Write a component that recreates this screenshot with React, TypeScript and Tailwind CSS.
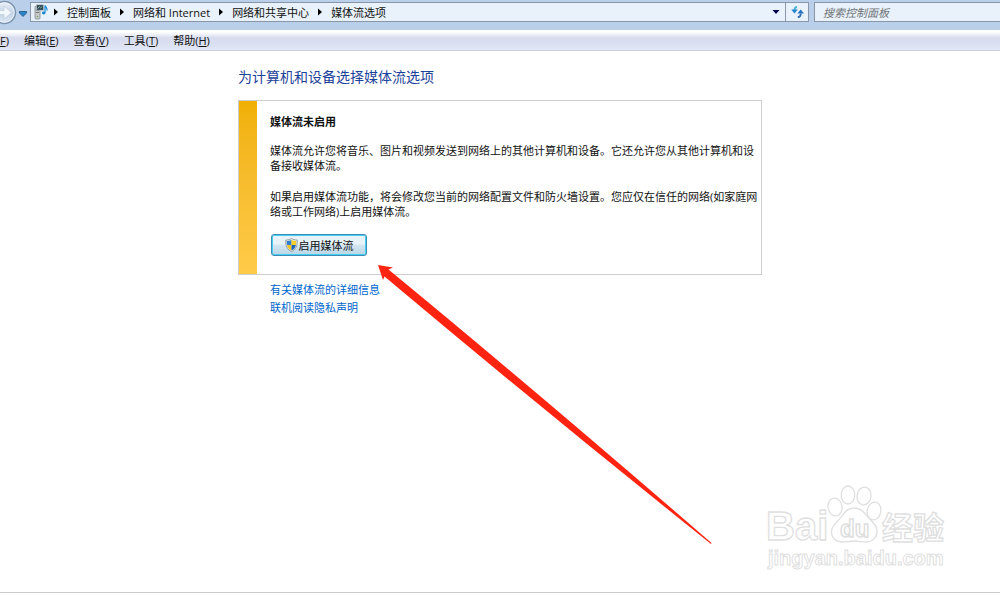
import { Fragment } from "react";

const crumbs = ["控制面板", "网络和 Internet", "网络和共享中心", "媒体流选项"];

const menus = [
  { label: "编辑", accessKey: "E" },
  { label: "查看", accessKey: "V" },
  { label: "工具", accessKey: "T" },
  { label: "帮助", accessKey: "H" },
];

const links = ["有关媒体流的详细信息", "联机阅读隐私声明"];

const CrumbArrow = () => (
  <svg viewBox="0 0 4 8" className="mx-[9px] h-2 w-1 shrink-0" aria-hidden="true">
    <path d="M0 0.5 4 4 0 7.5Z" fill="#000" />
  </svg>
);

const DownArrow = () => (
  <svg viewBox="0 0 8 4" className="h-1 w-2" aria-hidden="true">
    <path d="M0.5 0h7L4 4Z" fill="#00004c" />
  </svg>
);

const ForwardIcon = () => (
  <svg viewBox="0 0 17 26" className="h-[26px] w-[17px]" aria-hidden="true">
    <defs>
      <linearGradient id="forward" x1="0" y1="0" x2="0" y2="1">
        <stop offset="0" stopColor="#eef3f9" />
        <stop offset="0.5" stopColor="#c3d3e6" />
        <stop offset="1" stopColor="#dce9f6" />
      </linearGradient>
    </defs>
    <circle cx="4.5" cy="13.5" r="11" fill="url(#forward)" stroke="#7d92ac" strokeWidth="1.4" />
    <circle cx="4.5" cy="13.5" r="9.8" fill="none" stroke="#edf4fb" strokeWidth="0.8" />
    <path
      d="M-4 11.5H4V7l7.5 6.5L4 20v-4.5h-8Z"
      fill="#f2f7fc"
      stroke="#b8c8da"
      strokeWidth="0.6"
    />
  </svg>
);

const MediaIcon = () => (
  <svg viewBox="0 0 14 16" className="h-4 w-[14px]" aria-hidden="true">
    <rect x="1" y="2" width="5" height="13" rx="1" fill="#c9cccd" stroke="#858a8d" strokeWidth="0.8" />
    <path d="M2 6.5h3M2 8.5h3" stroke="#5e6467" strokeWidth="0.8" />
    <circle cx="3.5" cy="12.5" r="0.8" fill="#62a854" />
    <rect x="2.5" y="0.8" width="7" height="5.4" fill="#2c4351" stroke="#b8c4cb" strokeWidth="0.7" />
    <path d="M3.5 4.8 5.2 2.6l1.4 1.3 1.7-1.4" fill="none" stroke="#9fd0b4" strokeWidth="0.8" />
    <path d="M11 8.5V1.5c.4 1.5 2.8 2 1.8 5" fill="none" stroke="#1689d2" strokeWidth="1.2" />
    <ellipse cx="9.7" cy="9" rx="1.8" ry="1.4" fill="#1689d2" />
  </svg>
);

const RefreshIcon = () => (
  <svg viewBox="0 0 13 12" className="h-3 w-[13px]" aria-hidden="true">
    <path d="M6 1C4 1 3.6 2 3.6 4" fill="none" stroke="#45b4dc" strokeWidth="1.8" />
    <path d="M0.2 3.6h6.6L3.5 7.5Z" fill="#2586cb" />
    <path d="M6.8 11.2c2.2 0 2.9-1.3 2.9-3.7" fill="none" stroke="#2d6bb9" strokeWidth="1.8" />
    <path d="M6.4 7.5h6.6L9.7 3.5Z" fill="#2473c0" />
  </svg>
);

const ShieldIcon = () => (
  <svg viewBox="0 0 13 14" className="h-[14px] w-[13px]" aria-hidden="true">
    <defs>
      <clipPath id="shield">
        <path d="M6.5 1.7C5 2.7 3.5 3 1.8 3c0 4.6.8 7.7 4.7 9.6C10.4 10.7 11.2 7.6 11.2 3 9.5 3 8 2.7 6.5 1.7Z" />
      </clipPath>
    </defs>
    <path
      d="M6.5.5C4.9 1.6 3 2 .8 2c-.2 5.6 1 9.5 5.7 11.5C11.2 11.5 12.4 7.6 12.2 2 10 2 8.1 1.6 6.5.5Z"
      fill="#e8eaeb"
      stroke="#858d92"
      strokeWidth="0.8"
    />
    <g clipPath="url(#shield)">
      <path d="M0 0h6.5v7H0z" fill="#2f7fd0" />
      <path d="M6.5 0H13v7H6.5z" fill="#f7cf27" />
      <path d="M0 7h6.5v7H0z" fill="#f4c51f" />
      <path d="M6.5 7H13v7H6.5z" fill="#1f64b5" />
    </g>
  </svg>
);

const Watermark = () => (
  <svg
    viewBox="0 0 190 100"
    className="pointer-events-none absolute right-[50px] bottom-[13px] h-[100px] w-[190px] font-['Liberation_Sans','Noto_Sans_CJK_SC',sans-serif] font-bold"
    fill="#fff"
    stroke="#dfdfdf"
    strokeWidth="1.3"
  >
    <text x="6" y="61" fontSize="40">Bai</text>
    <ellipse cx="75" cy="28" rx="7" ry="9" transform="rotate(-10 75 28)" />
    <ellipse cx="88" cy="16" rx="6.8" ry="9" />
    <ellipse cx="104" cy="17" rx="7" ry="9" transform="rotate(8 104 17)" />
    <ellipse cx="114" cy="32" rx="6.8" ry="9" transform="rotate(10 114 32)" />
    <path d="M94 29c-6 0-9 3-12 8s-10 8-10.5 15c-.3 7.5 5 11 11 11 4 0 7-1 11.500-1s8 1 12 1c6 0 11-4 11-11 0-7-6-10-10-15-4-5-7-8-13-8Z" />
    <text x="80" y="58" fontSize="24" strokeWidth="1.5">du</text>
    <text x="122" y="60" fontSize="31">经验</text>
    <text x="8" y="86" fontSize="20" strokeWidth="1">jingyan.baidu.com</text>
  </svg>
);

export default function App() {
  return (
    <div className="relative flex min-h-screen flex-col overflow-hidden border-b border-[#cbcbcb] bg-white font-['Open_Sans','Noto_Sans_CJK_SC',sans-serif] text-[11px] leading-[15px] text-[#111]">
      <header>
        <div className="flex h-[30px] items-start bg-[#bad0ea]">
          <button aria-label="前进" className="-mt-px">
            <ForwardIcon />
          </button>
          <button aria-label="最近浏览的位置" className="mt-[11px] ml-0.5 mr-[3px]">
            <svg viewBox="0 0 8 6" className="h-1.5 w-2" aria-hidden="true">
              <path d="M.5.5h7V2L4 5.5.5 2Z" fill="#2b86c7" stroke="#174f86" strokeWidth="0.8" />
            </svg>
          </button>
          <div className="mt-0.5 flex h-5 min-w-0 flex-1 items-center border border-[#8996a7] bg-[#e9f1fa] pl-[3px]">
            <MediaIcon />
            <nav aria-label="地址" className="-ml-[3px] flex min-w-0 flex-1 items-center overflow-hidden whitespace-nowrap">
              {crumbs.map((crumb) => (
                <Fragment key={crumb}>
                  <CrumbArrow />
                  <button>{crumb}</button>
                </Fragment>
              ))}
            </nav>
            <button aria-label="以前的位置" className="flex h-full w-5 items-center justify-center border-r border-[#8996a7]">
              <DownArrow />
            </button>
            <button aria-label="刷新" className="flex h-full w-[22px] items-center justify-center">
              <RefreshIcon />
            </button>
          </div>
          <input
            type="search"
            aria-label="搜索控制面板"
            placeholder="搜索控制面板"
            className="mt-0.5 ml-[5px] h-5 w-[186px] border border-r-0 border-[#8996a7] bg-[#e9f1fa] px-2 italic outline-none placeholder:text-[#707478]"
          />
        </div>
        <nav
          aria-label="菜单"
          className="flex h-[21px] items-center gap-[15px] border-b border-[#cdd2de] bg-linear-to-b from-white from-10% via-[#d6dcee] via-40% to-[#e1e6f5]"
        >
          <button>
            <u>F</u>)
          </button>
          {menus.map((menu) => (
            <button key={menu.accessKey}>
              {menu.label}(<u>{menu.accessKey}</u>)
            </button>
          ))}
        </nav>
      </header>

      <main className="relative mx-auto w-full max-w-[524px] pt-4">
        <h1 className="text-sm leading-5 text-[#1c4299]">为计算机和设备选择媒体流选项</h1>
        <section className="mt-[13px] flex border border-[#cdcdcd]">
          <div className="w-[18px] shrink-0 bg-linear-to-b from-[#f0b000] to-[#ffcb48]" />
          <div className="min-w-0 flex-1 pt-[13px] pb-[18px] pl-[13px]">
            <h2 className="font-bold">媒体流未启用</h2>
            <p className="mt-[14px]">
              媒体流允许您将音乐、图片和视频发送到网络上的其他计算机和设备。它还允许您从其他计算机和设备接收媒体流。
            </p>
            <p className="mt-4">
              如果启用媒体流功能，将会修改您当前的网络配置文件和防火墙设置。您应仅在信任的网络(如家庭网络或工作网络)上启用媒体流。
            </p>
            <button className="mt-[15px] ml-px flex h-[22px] w-24 items-center justify-center rounded-[3px] border border-[#3c8db4] bg-linear-to-b from-[#e8f3f9] from-45% via-[#d3e6f1] via-50% to-[#b8d7e7] inset-ring inset-ring-[#47ccf3]">
              <ShieldIcon />
              <span className="ml-px">启用媒体流</span>
            </button>
          </div>
        </section>
        <ul className="mt-1.5 pl-8 leading-[18px]">
          {links.map((link) => (
            <li key={link}>
              <a href="#" className="text-[#0066cc]">
                {link}
              </a>
            </li>
          ))}
        </ul>
        <svg
          viewBox="0 0 336 282"
          className="pointer-events-none absolute top-[213px] left-[138px] h-[282px] w-[336px]"
          aria-hidden="true"
        >
          <path
            d="M2 1 17 3.5 12.5 5.5Q165 131 335.5 279L335 280Q165 144 8.500 12.500L7 16Z"
            fill="#ff2412"
          />
        </svg>
      </main>
      <Watermark />
    </div>
  );
}
